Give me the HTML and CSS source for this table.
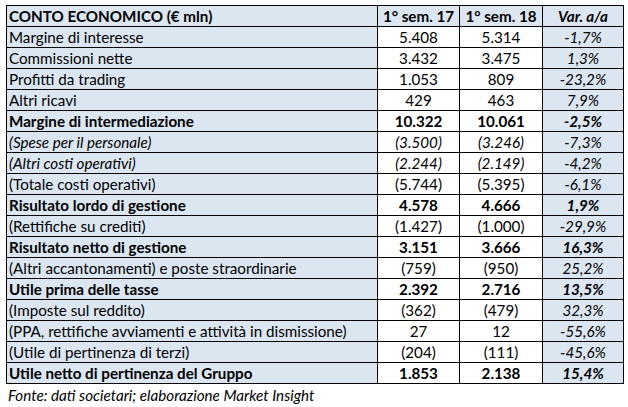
FILE: index.html
```html
<!DOCTYPE html>
<html lang="it">
<head>
<meta charset="utf-8">
<title>Conto economico</title>
<link rel="stylesheet" href="styles.css">
</head>
<body>
<div class="wrap">
<table class="ce">
  <colgroup>
    <col class="c-label">
    <col class="c-v1">
    <col class="c-v2">
    <col class="c-var">
  </colgroup>
  <tr class="head bold">
    <td class="label">CONTO ECONOMICO (€ mln)</td>
    <td class="num">1° sem. 17</td>
    <td class="num">1° sem. 18</td>
    <td class="var">Var. a/a</td>
  </tr>
  <tr><td class="label">Margine di interesse</td><td class="num">5.408</td><td class="num">5.314</td><td class="var">-1,7%</td></tr>
  <tr><td class="label">Commissioni nette</td><td class="num">3.432</td><td class="num">3.475</td><td class="var">1,3%</td></tr>
  <tr><td class="label">Profitti da trading</td><td class="num">1.053</td><td class="num">809</td><td class="var">-23,2%</td></tr>
  <tr><td class="label">Altri ricavi</td><td class="num">429</td><td class="num">463</td><td class="var">7,9%</td></tr>
  <tr class="bold"><td class="label">Margine di intermediazione</td><td class="num">10.322</td><td class="num">10.061</td><td class="var">-2,5%</td></tr>
  <tr class="ital"><td class="label">(Spese per il personale)</td><td class="num">(3.500)</td><td class="num">(3.246)</td><td class="var">-7,3%</td></tr>
  <tr class="ital"><td class="label">(Altri costi operativi)</td><td class="num">(2.244)</td><td class="num">(2.149)</td><td class="var">-4,2%</td></tr>
  <tr><td class="label">(Totale costi operativi)</td><td class="num">(5.744)</td><td class="num">(5.395)</td><td class="var">-6,1%</td></tr>
  <tr class="bold"><td class="label">Risultato lordo di gestione</td><td class="num">4.578</td><td class="num">4.666</td><td class="var">1,9%</td></tr>
  <tr><td class="label">(Rettifiche su crediti)</td><td class="num">(1.427)</td><td class="num">(1.000)</td><td class="var">-29,9%</td></tr>
  <tr class="bold"><td class="label">Risultato netto di gestione</td><td class="num">3.151</td><td class="num">3.666</td><td class="var">16,3%</td></tr>
  <tr><td class="label">(Altri accantonamenti) e poste straordinarie</td><td class="num">(759)</td><td class="num">(950)</td><td class="var">25,2%</td></tr>
  <tr class="bold"><td class="label">Utile prima delle tasse</td><td class="num">2.392</td><td class="num">2.716</td><td class="var">13,5%</td></tr>
  <tr><td class="label">(Imposte sul reddito)</td><td class="num">(362)</td><td class="num">(479)</td><td class="var">32,3%</td></tr>
  <tr><td class="label">(PPA, rettifiche avviamenti e attività in dismissione)</td><td class="num">27</td><td class="num">12</td><td class="var">-55,6%</td></tr>
  <tr><td class="label">(Utile di pertinenza di terzi)</td><td class="num">(204)</td><td class="num">(111)</td><td class="var">-45,6%</td></tr>
  <tr class="bold"><td class="label">Utile netto di pertinenza del Gruppo</td><td class="num">1.853</td><td class="num">2.138</td><td class="var">15,4%</td></tr>
</table>
<p class="source">Fonte: dati societari; elaborazione Market Insight</p>
</div>
</body>
</html>
```

FILE: styles.css
```css
html, body {
  margin: 0;
  padding: 0;
  background: #ffffff;
}
body {
  font-family: Lato, "Open Sans", "Liberation Sans", sans-serif;
  font-size: 15.2px;
  color: #000000;
}
.wrap {
  padding: 5px 0 0 6px;
}
.ce {
  border-collapse: collapse;
  table-layout: fixed;
  width: 617px;
}
.c-label { width: 371px; }
.c-v1 { width: 82px; }
.c-v2 { width: 83px; }
.c-var { width: 81px; }
.ce td {
  border: 1px solid #000000;
  height: 20px;
  padding: 0;
  line-height: 20px;
  white-space: nowrap;
  overflow: hidden;
}
.ce td.label {
  background: #dce6f1;
  padding-left: 2px;
  text-align: left;
}
.ce td.num {
  background: #ffffff;
  text-align: center;
}
.ce td.var {
  background: #dce6f1;
  text-align: center;
  font-style: italic;
}
.ce tr.head td {
  background: #dce6f1;
}
.ce tr.bold td {
  font-weight: 700;
}
.ce tr.ital td {
  font-style: italic;
}
.source {
  margin: 1px 0 0 2px;
  font-style: italic;
  line-height: 20px;
}
```
